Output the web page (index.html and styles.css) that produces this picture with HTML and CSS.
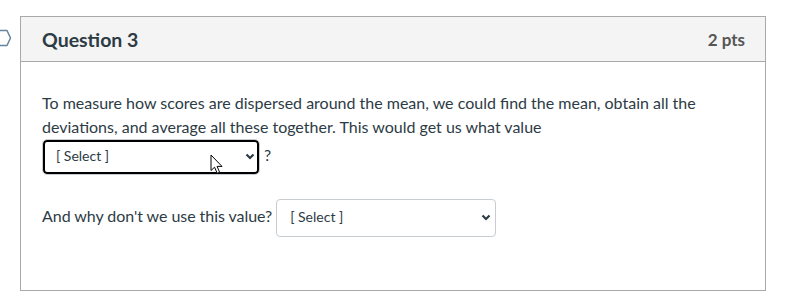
FILE: index.html
```html
<!DOCTYPE html>
<html lang="en">
<head>
    <meta charset="UTF-8">
    <meta name="viewport" content="width=device-width, initial-scale=1.0">
    <title>Question 3</title>
    <link rel="stylesheet" href="styles.css">
</head>
<body>
    <div class="question-row">
        <!-- Marcador da pergunta -->
        <div class="flag">
            <svg width="12" height="18" viewBox="0 0 12 18">
                <path d="M-6 1.5 H7 L10.5 9 L7 16.5 H-6" fill="none" stroke="#66849e" stroke-width="1.5" stroke-linejoin="round"/>
            </svg>
        </div>

        <div class="question">
            <div class="question-header">
                <h2>Question 3</h2>
                <span class="points">2 pts</span>
            </div>

            <div class="question-body">
                <p class="question-text">
                    To measure how scores are dispersed around the mean, we could find the mean, obtain all the deviations, and average all these together. This would get us what value
                    <span class="select-wrap first">
                        <select class="answer-select focused">
                            <option>[ Select ]</option>
                        </select>
                        <svg class="chevron" width="10" height="7" viewBox="0 0 10 7">
                            <path d="M1.5 1.5 L5 5 L8.5 1.5" fill="none" stroke="#2d3b45" stroke-width="2.2"/>
                        </svg>
                        <!-- Ponteiro do mouse -->
                        <svg class="cursor" width="14" height="21" viewBox="0 0 14 21">
                            <path d="M1 1 V16.5 L4.6 13.2 L7.2 19.3 L9.6 18.3 L7.1 12.4 H12 Z" fill="#fff" stroke="#000" stroke-width="1" stroke-linejoin="round"/>
                        </svg>
                    </span>
                    ?
                </p>

                <p class="question-text second">
                    And why don't we use this value?
                    <span class="select-wrap second-select">
                        <select class="answer-select">
                            <option>[ Select ]</option>
                        </select>
                        <svg class="chevron" width="10" height="7" viewBox="0 0 10 7">
                            <path d="M1.5 1.5 L5 5 L8.5 1.5" fill="none" stroke="#2d3b45" stroke-width="2.2"/>
                        </svg>
                    </span>
                </p>
            </div>
        </div>
    </div>
</body>
</html>
```

FILE: styles.css
```css
body {
    font-family: Lato, "Open Sans", sans-serif;
    margin: 0;
    padding: 0;
    background-color: #fff;
    color: #2d3b45;
}
.question-row {
    display: flex;
    align-items: flex-start;
    padding-top: 16px;
}
.flag {
    width: 20px;
    padding-top: 13px;
}
.flag svg {
    display: block;
}
.question {
    width: 744px;
    border: 1px solid #a9a9a9;
}
.question-header {
    display: flex;
    justify-content: space-between;
    align-items: center;
    height: 44px;
    padding: 0 20px 0 21px;
    background-color: #f4f4f4;
    border-bottom: 1px solid #a9a9a9;
}
.question-header h2 {
    margin: 0;
    font-size: 19.5px;
    font-weight: 700;
    color: #2d3b45;
}
.points {
    font-size: 17px;
    font-weight: 700;
    color: #555;
}
.question-body {
    padding: 29px 20px 53px 21px;
}
.question-text {
    margin: 0;
    font-size: 16px;
    line-height: 24px;
}
.question-text.second {
    margin-top: 24px;
    letter-spacing: -0.05px;
}
.select-wrap {
    position: relative;
    display: inline-block;
    vertical-align: middle;
}
.answer-select {
    appearance: none;
    -webkit-appearance: none;
    display: block;
    width: 218px;
    height: 36px;
    padding: 0 30px 3px 13px;
    font-family: Lato, "Open Sans", sans-serif;
    font-size: 14px;
    letter-spacing: 0;
    color: #2d3b45;
    background-color: #fff;
    border: 1px solid #c7cdd1;
    border-radius: 4px;
    outline: none;
}
.answer-select.focused {
    box-shadow: inset 0 0 0 2px #000;
    border-radius: 5px;
}
.second-select .answer-select {
    width: 220px;
    height: 38px;
}
.chevron {
    position: absolute;
    right: 5px;
    top: 50%;
    margin-top: -4px;
}
.cursor {
    position: absolute;
    left: 168px;
    top: 15px;
}
```
